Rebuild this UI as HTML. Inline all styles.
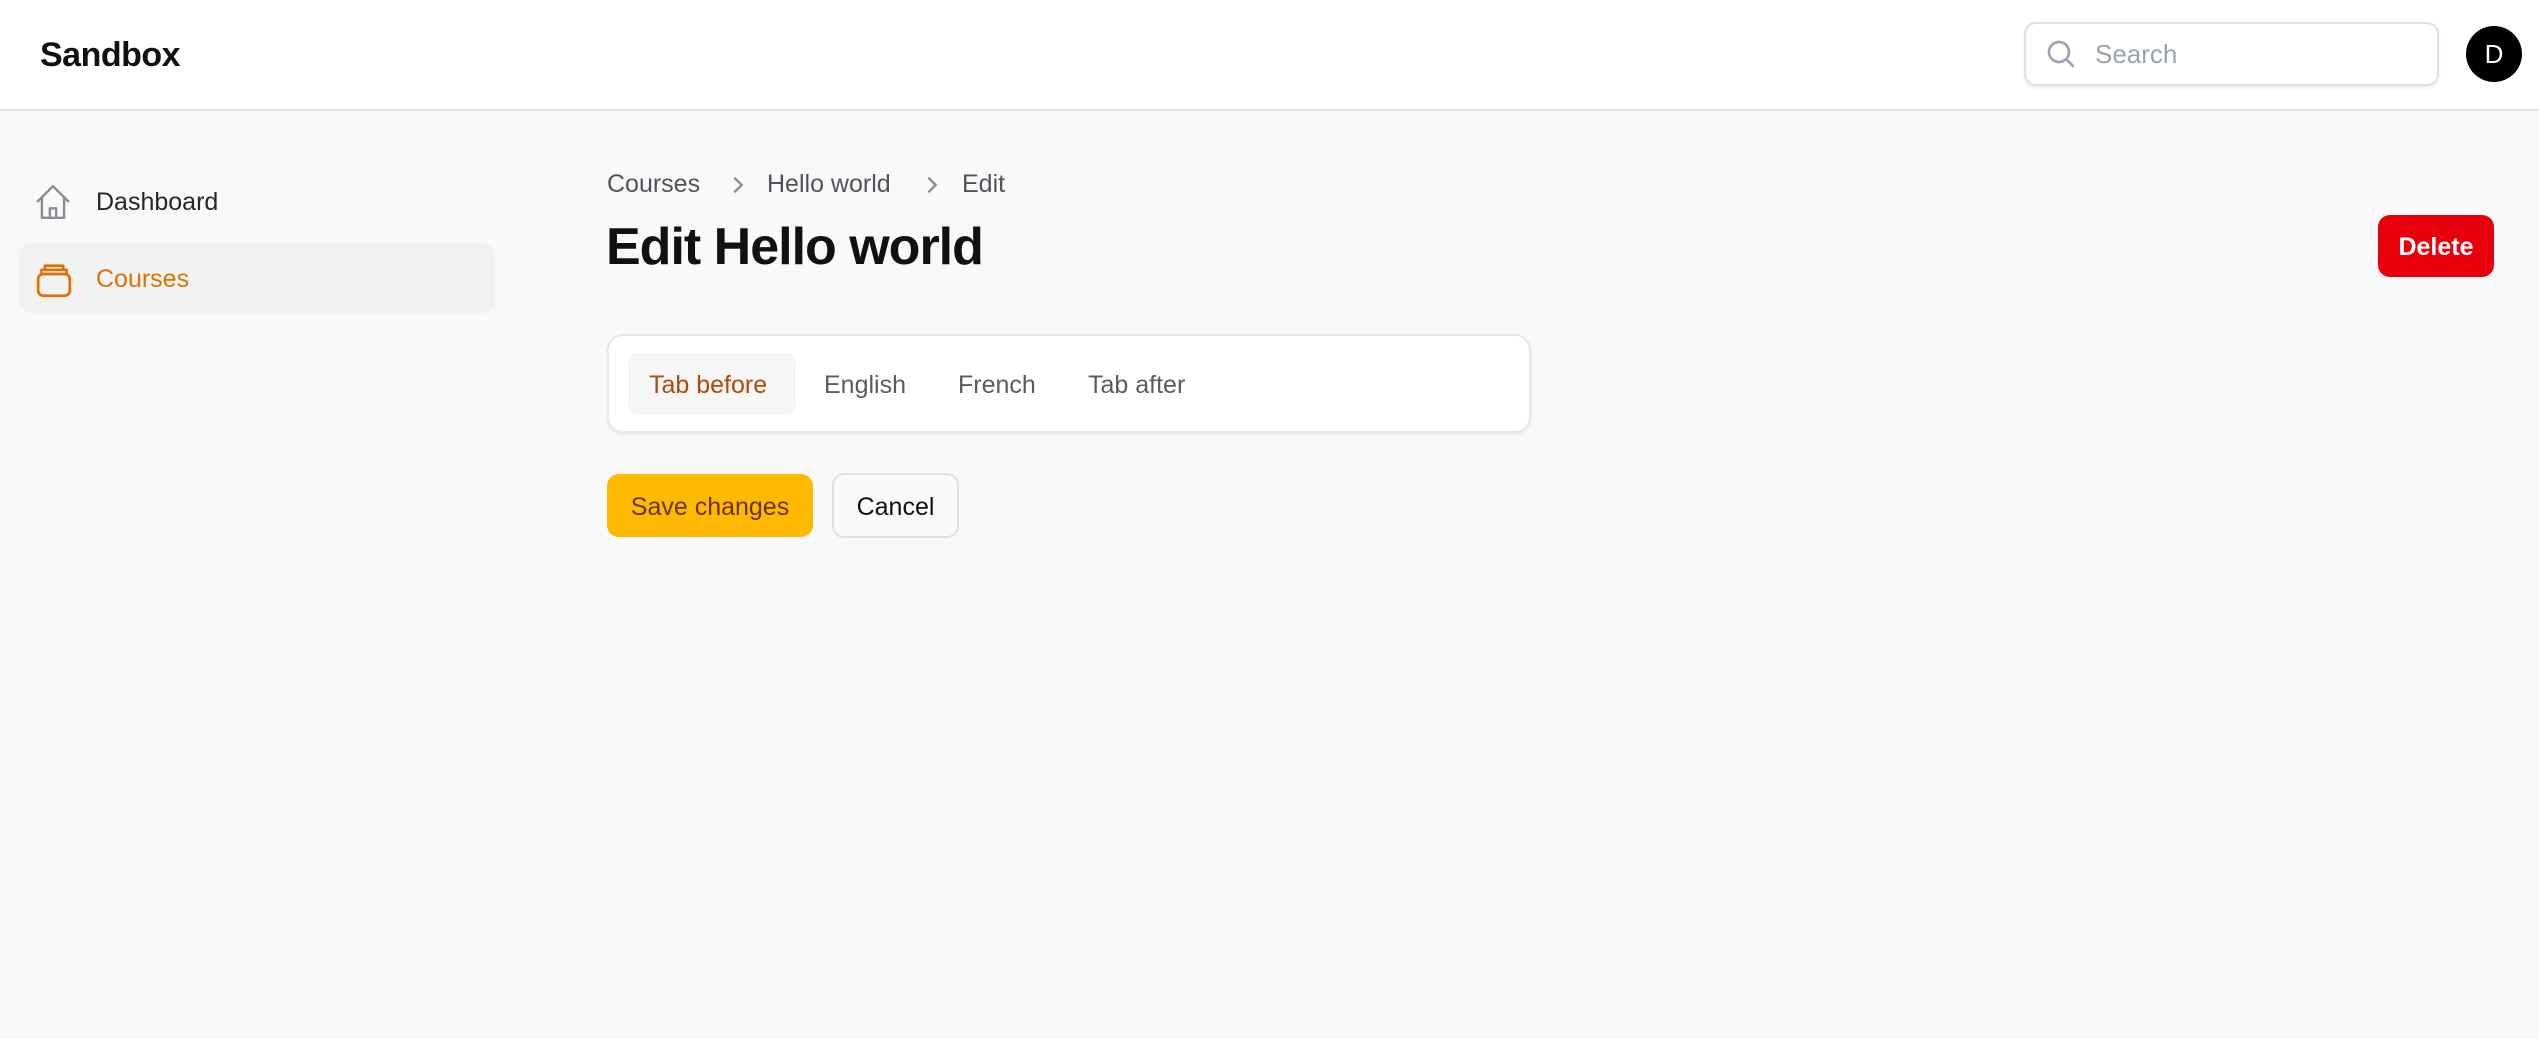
<!DOCTYPE html>
<html><head><meta charset="utf-8"><style>
*{box-sizing:border-box;margin:0;padding:0}
body{width:2539px;height:1039px;background:#f9f9f9;font-family:"Liberation Sans",sans-serif;position:relative;overflow:hidden;color:#111}
.hdr{position:absolute;left:0;top:0;width:2539px;height:111px;background:#fff;border-bottom:2px solid #e4e4e7}
.abs{position:absolute}
</style></head><body>
<div class="hdr"></div>
<div class="abs" style="left:40px;top:36px;font-size:34px;font-weight:bold;letter-spacing:-0.5px">Sandbox</div>
<div class="abs" style="left:2024px;top:22px;width:415px;height:64px;background:#fff;border:2px solid #e0e0e3;border-radius:12px;box-shadow:0 2px 3px rgba(0,0,0,.08)"></div>
<svg class="abs" style="left:2045px;top:38px" width="32" height="32" viewBox="0 0 24 24" fill="none" stroke="#9ca3af" stroke-width="2" stroke-linecap="round"><circle cx="10.5" cy="10.5" r="7.5"/><path d="M16 16l5 5"/></svg>
<div class="abs" style="left:2095px;top:39px;font-size:26px;color:#9ca3af">Search</div>
<div class="abs" style="left:2466px;top:26px;width:56px;height:56px;border-radius:50%;background:#000;color:#fff;font-size:26px;text-align:center;line-height:56px">D</div>

<svg class="abs" style="left:34px;top:182px" width="38" height="40" viewBox="0 0 24 24" fill="none" stroke="#8b8b95" stroke-width="1.5" stroke-linejoin="round"><path d="M2 12L12 2l10 10"/><path d="M5 9.5V22h14V9.5"/><path d="M10 22v-6h4v6"/></svg>
<div class="abs" style="left:96px;top:188px;font-size:25px;color:#27272a">Dashboard</div>
<div class="abs" style="left:19px;top:243px;width:476px;height:70px;background:#f2f2f2;border-radius:12px"></div>
<svg class="abs" style="left:34px;top:259px" width="40" height="40" viewBox="0 0 24 24" fill="none" stroke="#e07000" stroke-width="1.6" stroke-linejoin="round"><rect x="2.5" y="9" width="19" height="13" rx="3"/><path d="M4.5 9V6.5h15V9"/><path d="M6.5 6.5V4h11v2.5"/></svg>
<div class="abs" style="left:96px;top:265px;font-size:25px;color:#e07000">Courses</div>

<div class="abs" style="left:607px;top:170px;font-size:25px;color:#52525b;white-space:nowrap">Courses</div>
<svg class="abs" style="left:728px;top:174px" width="20" height="22" viewBox="0 0 10 12" fill="none" stroke="#8b8b95" stroke-width="1.3"><path d="M3 2l4 4-4 4"/></svg>
<div class="abs" style="left:767px;top:170px;font-size:25px;color:#52525b;white-space:nowrap">Hello world</div>
<svg class="abs" style="left:922px;top:174px" width="20" height="22" viewBox="0 0 10 12" fill="none" stroke="#8b8b95" stroke-width="1.3"><path d="M3 2l4 4-4 4"/></svg>
<div class="abs" style="left:962px;top:170px;font-size:25px;color:#52525b">Edit</div>
<div class="abs" style="left:606px;top:217px;font-size:52px;font-weight:bold;letter-spacing:-1px;white-space:nowrap">Edit Hello world</div>
<div class="abs" style="left:2378px;top:215px;width:116px;height:62px;background:#e7000b;border-radius:12px;color:#fff;font-size:25px;font-weight:bold;text-align:center;line-height:64px">Delete</div>

<div class="abs" style="left:607px;top:334px;width:924px;height:99px;background:#fff;border:2px solid #e8e8ea;border-radius:16px;box-shadow:0 2px 3px rgba(0,0,0,.06)"></div>
<div class="abs" style="left:628px;top:353px;width:168px;height:62px;background:#f6f6f6;border-radius:10px"></div>
<div class="abs" style="left:649px;top:371px;font-size:25px;color:#b04a06">Tab before</div>
<div class="abs" style="left:824px;top:371px;font-size:25px;color:#5b5b66">English</div>
<div class="abs" style="left:958px;top:371px;font-size:25px;color:#5b5b66">French</div>
<div class="abs" style="left:1088px;top:371px;font-size:25px;color:#5b5b66">Tab after</div>

<div class="abs" style="left:607px;top:474px;width:206px;height:63px;background:#ffb900;border-radius:12px;color:#6b3300;font-size:25px;text-align:center;line-height:66px">Save changes</div>
<div class="abs" style="left:832px;top:473px;width:127px;height:65px;background:#fafafa;border:2px solid #e0e0e3;border-radius:12px;color:#111;font-size:25px;text-align:center;line-height:64px">Cancel</div>
</body></html>
